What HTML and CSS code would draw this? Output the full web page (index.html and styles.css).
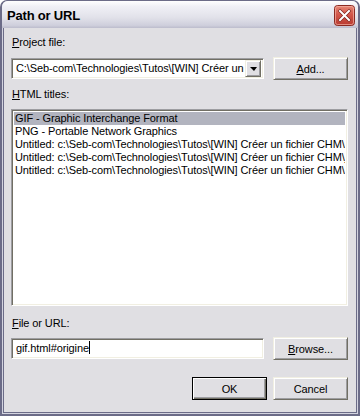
FILE: index.html
```html
<!DOCTYPE html>
<html>
<head>
    <meta charset="UTF-8">
    <title>Path or URL</title>
    <link rel="stylesheet" href="styles.css">
</head>
<body>

<div class="window">
    <div class="titlebar">
        <span class="title">Path or URL</span>
        <span class="close-btn">
            <svg width="21" height="21" viewBox="0 0 21 21">
                <defs>
                    <linearGradient id="red" x1="0" y1="0" x2="0" y2="1">
                        <stop offset="0" stop-color="#e88a78"/>
                        <stop offset="0.45" stop-color="#d2564a"/>
                        <stop offset="1" stop-color="#b83a30"/>
                    </linearGradient>
                </defs>
                <rect x="0.5" y="0.5" width="20" height="20" rx="3" fill="url(#red)" stroke="#8a2a22"/>
                <rect x="1.5" y="1.5" width="18" height="18" rx="2" fill="none" stroke="#f4b0a4" stroke-opacity="0.7"/>
                <path d="M6 6 L15 15 M15 6 L6 15" stroke="#7a2018" stroke-width="3.2" stroke-linecap="square"/>
                <path d="M6 6 L15 15 M15 6 L6 15" stroke="#ffffff" stroke-width="2" stroke-linecap="square"/>
            </svg>
        </span>
    </div>

    <div class="client">
        <div class="label acc">Project file:</div>
        <div class="row">
            <div class="combo">
                <span class="combo-text">C:\Seb-com\Technologies\Tutos\[WIN] Créer un fichier CHM</span>
                <span class="drop-btn"><span class="arrow"></span></span>
            </div>
            <div class="btn"><span class="acc">Add...</span></div>
        </div>

        <div class="label acc gap-top">HTML titles:</div>
        <div class="listbox">
            <div class="item selected">GIF - Graphic Interchange Format</div>
            <div class="item">PNG - Portable Network Graphics</div>
            <div class="item">Untitled: c:\Seb-com\Technologies\Tutos\[WIN] Créer un fichier CHM\png.html</div>
            <div class="item">Untitled: c:\Seb-com\Technologies\Tutos\[WIN] Créer un fichier CHM\jpg.html</div>
            <div class="item">Untitled: c:\Seb-com\Technologies\Tutos\[WIN] Créer un fichier CHM\index.html</div>
        </div>

        <div class="label acc file-label">File or URL:</div>
        <div class="row file-row">
            <div class="edit">gif.html#origine<span class="caret"></span></div>
            <div class="btn"><span class="acc">Browse...</span></div>
        </div>

        <div class="actions">
            <div class="btn default">OK</div>
            <div class="btn">Cancel</div>
        </div>
    </div>
</div>

</body>
</html>
```

FILE: styles.css
```css
body {
    margin: 0;
    background: #ffffff;
}

.window {
    width: 360px;
    height: 416px;
    box-sizing: border-box;
    border: 2px solid #6c6c88;
    border-top: 1px solid #6c6c88;
    border-radius: 7px 7px 0 0;
    background: #d4d4e0;
    display: flex;
    flex-direction: column;
    font-family: "Liberation Sans", Arial, sans-serif;
    font-size: 11px;
    letter-spacing: -0.1px;
    color: #000000;
}

.titlebar {
    height: 27px;
    flex-shrink: 0;
    display: flex;
    align-items: center;
    padding: 0 3px 0 5px;
    border-radius: 6px 6px 0 0;
    background: linear-gradient(#ffffff, #f0f0f6 20%, #e2e2ea 60%, #cfcfdc 90%, #bcbccc);
}

.title {
    font-family: "Liberation Sans", Arial, sans-serif;
    font-weight: bold;
    font-size: 13px;
    letter-spacing: -0.2px;
    margin-top: 2px;
}

.close-btn {
    margin-left: auto;
    margin-top: 1px;
    display: flex;
}

.client {
    flex: 1;
    margin: 0 1px 1px 1px;
    border: 1px solid #6c6c88;
    border-top: none;
    background: #e0dfe3;
    padding: 8px 8px 0 7px;
    display: flex;
    flex-direction: column;
}

/* underlined access key */
.acc::first-letter {
    text-decoration: underline;
}

.label {
    height: 13px;
    line-height: 13px;
    padding-left: 1px;
}

.gap-top {
    margin-top: 8px;
}

.row {
    display: flex;
    align-items: center;
    justify-content: space-between;
    height: 23px;
    margin-top: 8px;
}

/* sunken 3D fields */
.combo,
.edit,
.listbox {
    box-sizing: border-box;
    background: #ffffff;
    border-top: 1px solid #9d9da1;
    border-left: 1px solid #9d9da1;
    border-right: 1px solid #ffffff;
    border-bottom: 1px solid #ffffff;
    box-shadow: inset 1px 1px 0 #716f64, inset -1px -1px 0 #f1efe2;
}

.combo {
    width: 253px;
    height: 21px;
    display: flex;
    align-items: center;
    padding: 2px;
}

.combo-text {
    flex: 1;
    overflow: hidden;
    white-space: nowrap;
    padding-left: 2px;
    line-height: 13px;
}

.drop-btn {
    width: 16px;
    height: 17px;
    box-sizing: border-box;
    background: #e0dfe3;
    border-top: 1px solid #f1efe2;
    border-left: 1px solid #f1efe2;
    border-right: 1px solid #716f64;
    border-bottom: 1px solid #716f64;
    box-shadow: inset 1px 1px 0 #ffffff, inset -1px -1px 0 #9d9da1;
    display: flex;
    align-items: center;
    justify-content: center;
}

.arrow {
    width: 0;
    height: 0;
    border-left: 4px solid transparent;
    border-right: 3px solid transparent;
    border-top: 4px solid #000000;
}

.btn {
    width: 75px;
    height: 23px;
    box-sizing: border-box;
    background: #e0dfe3;
    border-top: 1px solid #f1efe2;
    border-left: 1px solid #f1efe2;
    border-right: 1px solid #716f64;
    border-bottom: 1px solid #716f64;
    box-shadow: inset 1px 1px 0 #ffffff, inset -1px -1px 0 #9d9da1;
    display: flex;
    align-items: center;
    justify-content: center;
}

.btn .acc {
    display: inline-block;
}

.btn.default {
    border: 1px solid #000000;
    box-shadow: inset 1px 1px 0 #ffffff, inset -1px -1px 0 #716f64, inset -2px -2px 0 #9d9da1;
}

.listbox {
    margin-top: 8px;
    height: 197px;
    padding: 2px;
    overflow: hidden;
}

.item {
    height: 13px;
    line-height: 13px;
    white-space: nowrap;
    overflow: hidden;
    padding-left: 1px;
}

.item.selected {
    background: #b2b4bf;
}

.file-label {
    margin-top: 11px;
}

.file-row {
    margin-top: 7px;
}

.edit {
    width: 253px;
    height: 21px;
    padding: 2px 0 0 4px;
    line-height: 15px;
    white-space: nowrap;
}

.caret {
    display: inline-block;
    width: 1px;
    height: 13px;
    background: #000000;
    vertical-align: -2px;
}

.actions {
    display: flex;
    justify-content: flex-end;
    gap: 6px;
    margin-top: 17px;
}
```
